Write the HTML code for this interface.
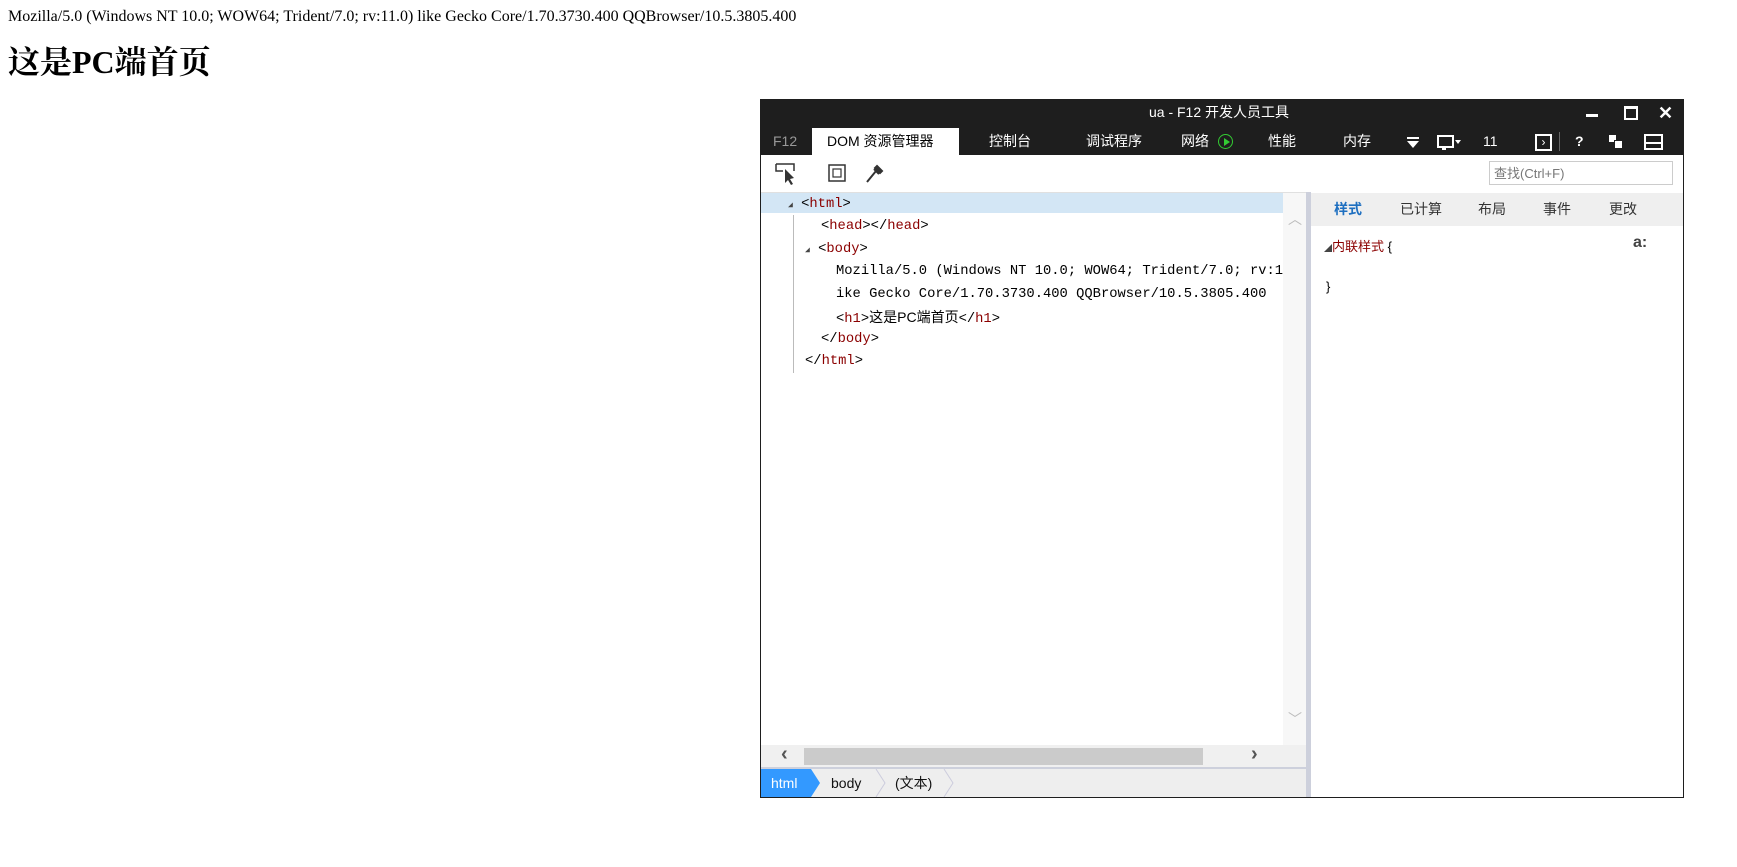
<!DOCTYPE html>
<html><head><meta charset="utf-8">
<style>
html,body{margin:0;padding:0;background:#fff;width:1737px;height:867px;overflow:hidden;position:relative}
.pg{position:absolute;left:8px;top:8px;font-family:"Liberation Serif","Noto Serif CJK SC",serif;font-size:16px;color:#000;white-space:nowrap}
h1{position:absolute;left:8px;top:42px;margin:0;font-family:"Liberation Serif","Noto Serif CJK SC",serif;font-size:32px;font-weight:bold;line-height:40px}
.ui{font-family:"Liberation Sans","Noto Sans CJK SC",sans-serif}
.dt{position:absolute;left:760px;top:99px;width:922px;height:698px;border:1px solid #1e1e1e;border-top:none;background:#fff;overflow:hidden}
.title{position:absolute;left:0;top:0;width:922px;height:29px;background:#1e1e1e;color:#fff;font-size:14px;text-align:center;line-height:26px}
.tabs{position:absolute;left:0;top:29px;width:922px;height:27px;background:#1e1e1e;color:#fff;font-size:14px}
.tabs span{position:absolute;top:0;line-height:27px}
.abs{position:absolute}
.mono{font-family:"Liberation Mono","DejaVu Sans Mono",monospace;font-size:13.8px;white-space:nowrap}
.row{position:absolute;height:22px;line-height:22px}
.t{color:#8b0000}
.tri{font-size:8px;color:#444}
</style></head><body>
<div class="pg">Mozilla/5.0 (Windows NT 10.0; WOW64; Trident/7.0; rv:11.0) like Gecko Core/1.70.3730.400 QQBrowser/10.5.3805.400</div>
<h1>这是PC端首页</h1>

<div class="dt ui">
 <div class="title"><span style="position:relative;left:-3px">ua - F12 开发人员工具</span>
  <div class="abs" style="left:825px;top:15px;width:12px;height:3px;background:#fff"></div>
  <div class="abs" style="left:863px;top:7px;width:10px;height:9px;border:2px solid #fff;border-top-width:3px"></div>
  <div class="abs" style="left:897px;top:0;font-size:18px;font-weight:bold;line-height:28px">✕</div>
 </div>
 <div class="tabs">
  <span style="left:12px;color:#999">F12</span>
  <div class="abs" style="left:51px;top:0;width:147px;height:27px;background:#fff"></div>
  <span style="left:66px;color:#000">DOM 资源管理器</span>
  <span style="left:228px">控制台</span>
  <span style="left:325px">调试程序</span>
  <span style="left:420px">网络</span>
  <div class="abs" style="left:457px;top:6px;width:13px;height:13px;border:1.5px solid #3c3;border-radius:50%"></div>
  <div class="abs" style="left:463px;top:10px;width:0;height:0;border-left:6px solid #3c3;border-top:4px solid transparent;border-bottom:4px solid transparent"></div>
  <span style="left:507px">性能</span>
  <span style="left:582px">内存</span>
  <div class="abs" style="left:646px;top:9px;width:12px;height:2px;background:#fff"></div>
  <div class="abs" style="left:646px;top:13px;width:0;height:0;border-top:7px solid #fff;border-left:6px solid transparent;border-right:6px solid transparent"></div>
  <div class="abs" style="left:676px;top:7px;width:13px;height:9px;border:2px solid #fff"></div>
  <div class="abs" style="left:681px;top:18px;width:4px;height:4px;background:#fff"></div>
  <div class="abs" style="left:694px;top:12px;width:0;height:0;border-top:4px solid #fff;border-left:3px solid transparent;border-right:3px solid transparent"></div>
  <span style="left:722px">11</span>
  <div class="abs" style="left:774px;top:6px;width:13px;height:13px;border:2px solid #fff;font-size:12px;line-height:12px;text-align:center">›</div>
  <div class="abs" style="left:798px;top:4px;width:1px;height:19px;background:#666"></div>
  <span style="left:814px;font-weight:bold">?</span>
  <div class="abs" style="left:848px;top:7px;width:7px;height:7px;background:#fff"></div>
  <div class="abs" style="left:853px;top:12px;width:7px;height:7px;background:#fff;border:1px solid #1e1e1e"></div>
  <div class="abs" style="left:883px;top:6px;width:15px;height:12px;border:2px solid #fff"></div>
  <div class="abs" style="left:885px;top:14px;width:15px;height:2px;background:#fff"></div>
 </div>
 <!-- toolbar -->
 <svg class="abs" style="left:14px;top:63px" width="90" height="24" viewBox="0 0 90 24">
  <path d="M1 2H19V9M1 2V9H8" fill="none" stroke="#333" stroke-width="1.5"/>
  <path d="M10 7L10 21L13 18L16 23L18 22L15 17L19 16Z" fill="#333"/>
  <rect x="54" y="3" width="16" height="16" fill="none" stroke="#333" stroke-width="1.5"/>
  <rect x="58" y="7" width="8" height="8" fill="none" stroke="#333" stroke-width="1.2"/>
 </svg>
 <svg class="abs" style="left:103px;top:63px" width="20" height="22"><path d="M3 20L12 9M10 7L15 12M13 4L18 9L16 11L11 6Z" stroke="#333" stroke-width="2" fill="#333"/></svg>
 <div class="abs" style="left:728px;top:62px;width:184px;height:24px;border:1px solid #ccc;font-size:13px;color:#777;line-height:24px;padding-left:4px;box-sizing:border-box">查找(Ctrl+F)</div>
 <!-- left pane -->
 <div class="abs" style="left:0;top:93px;width:545px;height:1px;background:#e0e0e0"></div>
 <div class="abs" style="left:0;top:94px;width:522px;height:20px;background:#d3e6f5"></div>
 <div class="abs" style="left:32px;top:116px;width:1px;height:158px;background:#bbb"></div>
 <div class="abs mono" style="left:5px;top:96px">
  <div class="row" style="top:-1px;left:22px"><span class="tri">◢</span> &lt;<span class="t">html</span>&gt;</div>
  <div class="row" style="top:21px;left:55px">&lt;<span class="t">head</span>&gt;&lt;/<span class="t">head</span>&gt;</div>
  <div class="row" style="top:44px;left:39px"><span class="tri">◢</span> &lt;<span class="t">body</span>&gt;</div>
  <div class="row" style="top:66px;left:70px">Mozilla/5.0 (Windows NT 10.0; WOW64; Trident/7.0; rv:11</div>
  <div class="row" style="top:89px;left:70px">ike Gecko Core/1.70.3730.400 QQBrowser/10.5.3805.400</div>
  <div class="row" style="top:111px;left:70px">&lt;<span class="t">h1</span>&gt;<span class="ui" style="font-size:14px">这是PC端首页</span>&lt;/<span class="t">h1</span>&gt;</div>
  <div class="row" style="top:134px;left:55px">&lt;/<span class="t">body</span>&gt;</div>
  <div class="row" style="top:156px;left:39px">&lt;/<span class="t">html</span>&gt;</div>
 </div>
 <div class="abs" style="left:522px;top:94px;width:23px;height:552px;background:#f7f7f7"></div>
 <div class="abs" style="left:527px;top:110px;color:#bbb;font-size:14px">︿</div>
 <div class="abs" style="left:527px;top:610px;color:#bbb;font-size:14px">﹀</div>
 <div class="abs" style="left:0;top:646px;width:545px;height:22px;background:#f0f0f0"></div>
 <div class="abs" style="left:43px;top:649px;width:399px;height:17px;background:#cbcbcb"></div>
 <div class="abs" style="left:20px;top:644px;font-size:20px;font-weight:bold;color:#555">‹</div>
 <div class="abs" style="left:490px;top:644px;font-size:20px;font-weight:bold;color:#555">›</div>
 <div class="abs" style="left:0;top:668px;width:545px;height:30px;background:#eee;border-top:2px solid #cdd0dc;box-sizing:border-box"></div>
 <svg class="abs" style="left:0;top:670px" width="200" height="28">
  <path d="M0 0H50L59 14L50 28H0Z" fill="#3399ff"/>
  <path d="M115 0L124 14L115 28M183 0L192 14L183 28" fill="none" stroke="#ccd" stroke-width="1"/>
 </svg>
 <div class="abs" style="left:10px;top:670px;line-height:28px;font-size:14px;color:#fff">html</div>
 <div class="abs" style="left:70px;top:670px;line-height:28px;font-size:14px;color:#111">body</div>
 <div class="abs" style="left:134px;top:670px;line-height:28px;font-size:14px;color:#111">(文本)</div>
 <!-- splitter -->
 <div class="abs" style="left:545px;top:93px;width:5px;height:605px;background:#cdd0dc"></div>
 <!-- right pane -->
 <div class="abs" style="left:550px;top:94px;width:372px;height:33px;background:#efefef;font-size:14px;line-height:33px;color:#333">
  <span class="abs" style="left:23px;color:#1e6fc0;font-weight:bold">样式</span>
  <span class="abs" style="left:89px">已计算</span>
  <span class="abs" style="left:167px">布局</span>
  <span class="abs" style="left:232px">事件</span>
  <span class="abs" style="left:298px">更改</span>
 </div>
 <div class="abs" style="left:563px;top:137px;font-size:13px;color:#8b0000"><span class="tri">◢</span>内联样式 <span style="color:#000">{</span></div>
 <div class="abs" style="left:872px;top:135px;font-size:16px;font-weight:bold;color:#444">a:</div>
 <div class="abs" style="left:565px;top:180px;font-size:13px">}</div>
</div>
</body></html>
